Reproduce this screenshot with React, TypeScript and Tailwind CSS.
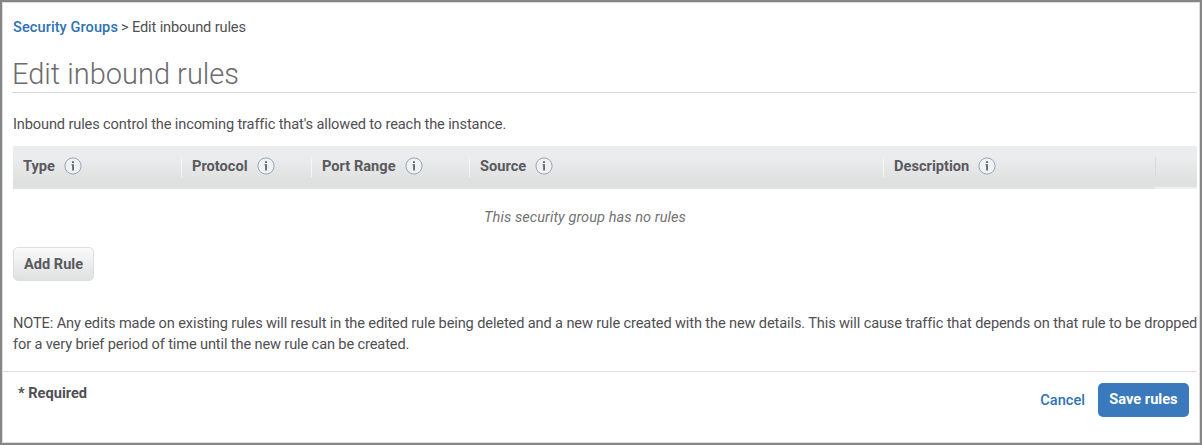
type Column = { label: string; width: string; inset: string };

const columns: Column[] = [
  { label: "Type", width: "w-[168px]", inset: "ml-[9px]" },
  { label: "Protocol", width: "w-[130px]", inset: "ml-[10px]" },
  { label: "Port Range", width: "w-[158px]", inset: "ml-[10px]" },
  { label: "Source", width: "w-[414px]", inset: "ml-[10px]" },
  { label: "Description", width: "w-[272px]", inset: "ml-[10px]" },
];

function InfoIcon() {
  return (
    <svg width="18" height="18" viewBox="0 0 18 18" className="shrink-0" aria-hidden="true">
      <circle cx="9" cy="9" r="8.1" fill="#f0f1f2" stroke="#94a5b7" strokeWidth="1" />
      <path d="M8.1 4.2h1.8v1.7H8.1zM7.5 7.2h2.4v6.2H8.2V8.2h-.7z" fill="#5a5a5e" />
    </svg>
  );
}

function RulesHeader() {
  return (
    <div className="mt-[12px] flex h-[43px] items-start bg-linear-to-b from-[#ebecee] from-25% to-[#dfe1e0] to-85%">
      {columns.map((column, index) => (
        <div key={column.label} className={`flex h-[43px] shrink-0 items-center ${column.width}`}>
          <div className={`-mt-[2px] h-5 w-px ${index === 0 ? "bg-transparent" : "bg-[#f5f6f6]"}`} />
          <div className={`-mt-[3px] flex items-center gap-[9px] ${column.inset}`}>
            <span className="text-[14.6px] leading-5 font-bold tracking-[0.02px] text-[#59595e]">{column.label}</span>
            <InfoIcon />
          </div>
        </div>
      ))}
      <div className="flex h-[43px] flex-1 items-center border-b-2 border-[#eeefef]">
        <div className="h-5 w-px bg-[#d9dbdb]" />
      </div>
    </div>
  );
}

export default function App() {
  return (
    <div className="flex h-[445px] w-[1202px] border-2 border-[#868686] bg-white font-['Roboto',sans-serif] text-[14.6px] text-[#505052]">
      <main className="flex flex-1 flex-col overflow-hidden border border-[#dddddf]">
        <section className="flex h-[368px] flex-col pr-[2px] pl-[10px]">
          <nav className="mt-[15px] flex h-5 items-center gap-[3px] whitespace-nowrap">
            <a href="#" className="font-medium tracking-[0.07px] text-[#3072b5]">Security Groups</a>
            <span className="tracking-[-0.13px]">&gt; Edit inbound rules</span>
          </nav>
          <h1 className="mt-[18px] -ml-px h-[37px] border-b border-[#d9d9d9] text-[29px] leading-[36px] font-light text-[#6c6c6e]">
            Edit inbound rules
          </h1>
          <p className="mt-[21px] h-5 leading-5 tracking-[-0.13px]">
            Inbound rules control the incoming traffic that's allowed to reach the instance.
          </p>
          <RulesHeader />
          <p className="mt-[18px] h-5 pr-[40px] text-center leading-5 tracking-[0.04px] text-[#747474] italic">
            This security group has no rules
          </p>
          <button className="mt-5 flex h-[34px] w-[81px] shrink-0 items-center justify-center rounded-[5px] border border-[#dcdfde] bg-linear-to-b from-[#fafafa] to-[#dfe1e0] pt-px text-[14.6px] font-bold text-[#59595e]">
            Add Rule
          </button>
          <p className="mt-[32px] leading-[21px] tracking-[-0.127px] whitespace-nowrap">
            NOTE: Any edits made on existing rules will result in the edited rule being deleted and a new rule created with
            the new details. This will cause traffic that depends on that rule to be dropped
            <br />
            for a very brief period of time until the new rule can be created.
          </p>
        </section>
        <footer className="mr-[2px] flex flex-1 items-start justify-between border-t border-[#dfdfdf] pr-[8px] pl-[15px]">
          <span className="mt-[11px] leading-5 font-bold text-[#505054]">* Required</span>
          <div className="mt-[11px] flex items-center gap-[13px]">
            <button className="pt-[2px] font-medium text-[#3072b5]">Cancel</button>
            <button className="h-[34px] w-[91px] rounded-[5px] bg-[#3a79bb] font-bold whitespace-nowrap text-white">Save rules</button>
          </div>
        </footer>
      </main>
    </div>
  );
}
